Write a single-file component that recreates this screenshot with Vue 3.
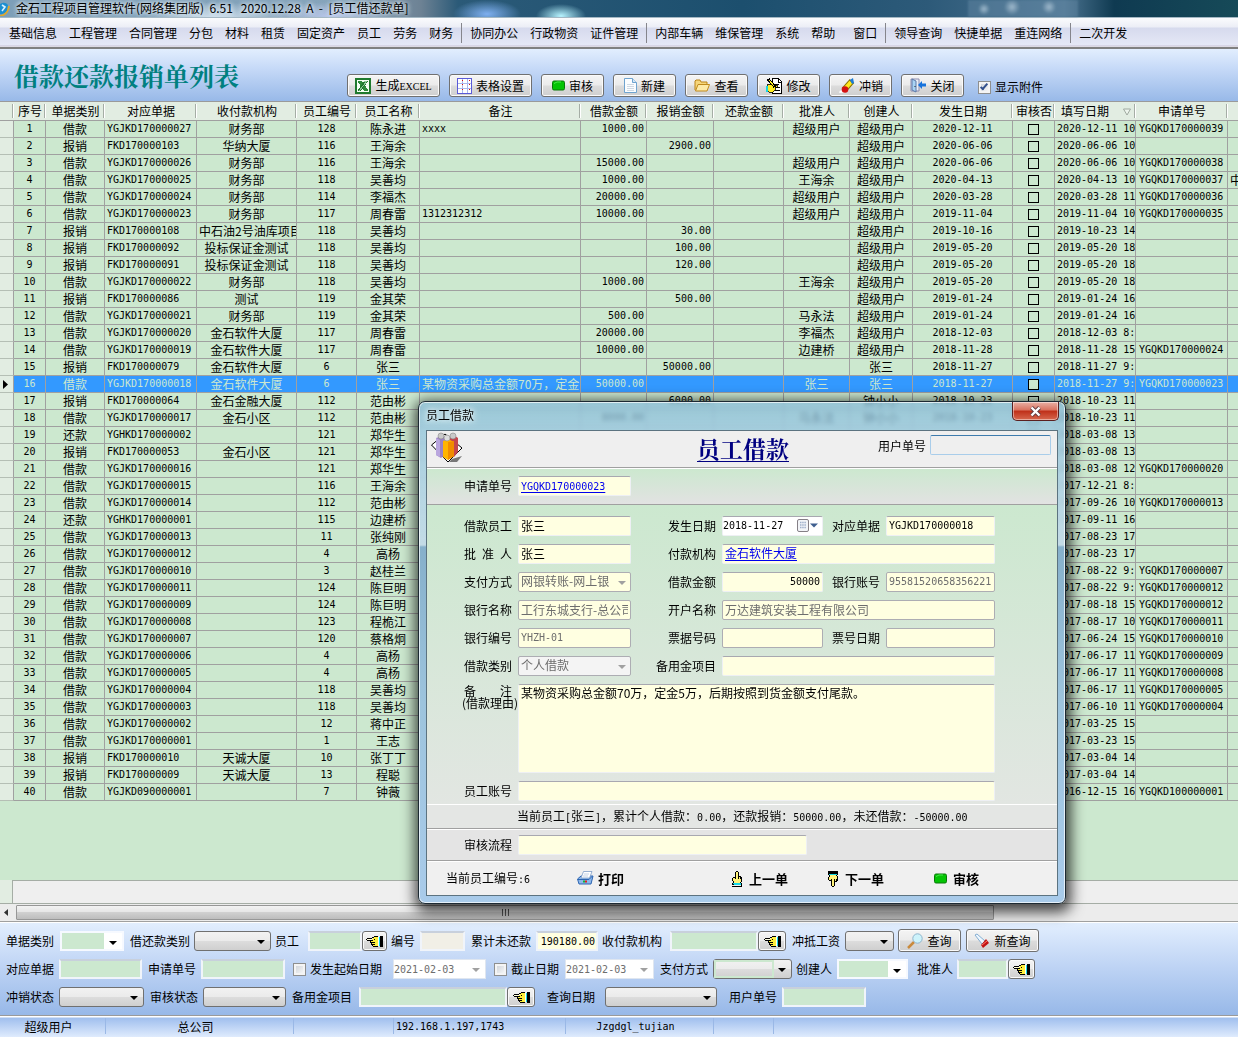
<script setup>
import { ref } from 'vue'

const menu = [
  '基础信息', '工程管理', '合同管理', '分包', '材料', '租赁', '固定资产', '员工', '劳务', '财务', '|',
  '协同办公', '行政物资', '证件管理', '|',
  '内部车辆', '维保管理', '系统', '帮助', '窗口', '|',
  '领导查询', '快捷单据', '重连网络', '|', '二次开发'
]

const tools = [
  { icon: 'excel', text: '生成', latin: 'EXCEL', size: 'xl' },
  { icon: 'grid', text: '表格设置', size: 'lg' },
  { icon: 'audit', text: '审核' },
  { icon: 'new', text: '新建' },
  { icon: 'folder', text: '查看' },
  { icon: 'edit', text: '修改' },
  { icon: 'eraser', text: '冲销' },
  { icon: 'door', text: '关闭' }
]

const columns = [
  { key: 'no', title: '序号' },
  { key: 'type', title: '单据类别' },
  { key: 'doc', title: '对应单据', align: 'left' },
  { key: 'org', title: '收付款机构' },
  { key: 'emp', title: '员工编号' },
  { key: 'name', title: '员工名称' },
  { key: 'note', title: '备注', align: 'left' },
  { key: 'loan', title: '借款金额', align: 'right' },
  { key: 'claim', title: '报销金额', align: 'right' },
  { key: 'repay', title: '还款金额', align: 'right' },
  { key: 'approver', title: '批准人' },
  { key: 'creator', title: '创建人' },
  { key: 'date', title: '发生日期' },
  { key: 'audited', title: '审核否' },
  { key: 'filled', title: '填写日期', align: 'left' },
  { key: 'apply', title: '申请单号', align: 'left' },
  { key: 'extra', title: '', align: 'left' }
]

const S = '超级用户'
const raw = [
  ['借款', 'YGJKD170000027', '财务部', '128', '陈永进', 'xxxx', '1000.00', '', S, S, '2020-12-11', '2020-12-11 10', 'YGQKD170000039'],
  ['报销', 'FKD170000103', '华纳大厦', '116', '王海余', '', '', '2900.00', '', S, '2020-06-06', '2020-06-06 10', ''],
  ['借款', 'YGJKD170000026', '财务部', '116', '王海余', '', '15000.00', '', S, S, '2020-06-06', '2020-06-06 10', 'YGQKD170000038'],
  ['借款', 'YGJKD170000025', '财务部', '118', '吴善均', '', '1000.00', '', '王海余', S, '2020-04-13', '2020-04-13 10', 'YGQKD170000037', '中'],
  ['借款', 'YGJKD170000024', '财务部', '114', '李福杰', '', '20000.00', '', S, S, '2020-03-28', '2020-03-28 11', 'YGQKD170000036'],
  ['借款', 'YGJKD170000023', '财务部', '117', '周春雷', '1312312312', '10000.00', '', S, S, '2019-11-04', '2019-11-04 10', 'YGQKD170000035'],
  ['报销', 'FKD170000108', '中石油2号油库项目', '118', '吴善均', '', '', '30.00', '', S, '2019-10-16', '2019-10-23 14', ''],
  ['报销', 'FKD170000092', '投标保证金测试', '118', '吴善均', '', '', '100.00', '', S, '2019-05-20', '2019-05-20 18', ''],
  ['报销', 'FKD170000091', '投标保证金测试', '118', '吴善均', '', '', '120.00', '', S, '2019-05-20', '2019-05-20 18', ''],
  ['借款', 'YGJKD170000022', '财务部', '118', '吴善均', '', '1000.00', '', '王海余', S, '2019-05-20', '2019-05-20 18', ''],
  ['报销', 'FKD170000086', '测试', '119', '金其荣', '', '', '500.00', '', S, '2019-01-24', '2019-01-24 16', ''],
  ['借款', 'YGJKD170000021', '财务部', '119', '金其荣', '', '500.00', '', '马永法', S, '2019-01-24', '2019-01-24 16', ''],
  ['借款', 'YGJKD170000020', '金石软件大厦', '117', '周春雷', '', '20000.00', '', '李福杰', S, '2018-12-03', '2018-12-03 8:', ''],
  ['借款', 'YGJKD170000019', '金石软件大厦', '117', '周春雷', '', '10000.00', '', '边建桥', S, '2018-11-28', '2018-11-28 15', 'YGQKD170000024'],
  ['报销', 'FKD170000079', '金石软件大厦', '6', '张三', '', '', '50000.00', '', '张三', '2018-11-27', '2018-11-27 9:', ''],
  ['借款', 'YGJKD170000018', '金石软件大厦', '6', '张三', '某物资采购总金额70万，定金', '50000.00', '', '张三', '张三', '2018-11-27', '2018-11-27 9:', 'YGQKD170000023'],
  ['报销', 'FKD170000064', '金石金融大厦', '112', '范由彬', '', '', '6000.00', '', '钟小小', '2018-10-23', '2018-10-23 11', ''],
  ['借款', 'YGJKD170000017', '金石小区', '112', '范由彬', '', '8000.00', '', '马永法', '钟小小', '2018-10-23', '2018-10-23 11', ''],
  ['还款', 'YGHKD170000002', '', '121', '郑华生', '', '', '', '', '', '', '2018-03-08 13', ''],
  ['报销', 'FKD170000053', '金石小区', '121', '郑华生', '', '', '', '', '', '', '2018-03-08 13', ''],
  ['借款', 'YGJKD170000016', '', '121', '郑华生', '', '', '', '', '', '', '2018-03-08 12', 'YGQKD170000020'],
  ['借款', 'YGJKD170000015', '', '116', '王海余', '', '', '', '', '', '', '2017-12-21 8:', ''],
  ['借款', 'YGJKD170000014', '', '112', '范由彬', '', '', '', '', '', '', '2017-09-26 10', 'YGQKD170000013'],
  ['还款', 'YGHKD170000001', '', '115', '边建桥', '', '', '', '', '', '', '2017-09-11 16', ''],
  ['借款', 'YGJKD170000013', '', '11', '张纯刚', '', '', '', '', '', '', '2017-08-23 17', ''],
  ['借款', 'YGJKD170000012', '', '4', '高杨', '', '', '', '', '', '', '2017-08-23 17', ''],
  ['借款', 'YGJKD170000010', '', '3', '赵桂兰', '', '', '', '', '', '', '2017-08-22 9:', 'YGQKD170000007'],
  ['借款', 'YGJKD170000011', '', '124', '陈巨明', '', '', '', '', '', '', '2017-08-22 9:', 'YGQKD170000012'],
  ['借款', 'YGJKD170000009', '', '124', '陈巨明', '', '', '', '', '', '', '2017-08-18 15', 'YGQKD170000012'],
  ['借款', 'YGJKD170000008', '', '123', '程桅江', '', '', '', '', '', '', '2017-08-17 10', 'YGQKD170000011'],
  ['借款', 'YGJKD170000007', '', '120', '蔡格炯', '', '', '', '', '', '', '2017-06-24 15', 'YGQKD170000010'],
  ['借款', 'YGJKD170000006', '', '4', '高杨', '', '', '', '', '', '', '2017-06-17 11', 'YGQKD170000009'],
  ['借款', 'YGJKD170000005', '', '4', '高杨', '', '', '', '', '', '', '2017-06-17 11', 'YGQKD170000008'],
  ['借款', 'YGJKD170000004', '', '118', '吴善均', '', '', '', '', '', '', '2017-06-17 11', 'YGQKD170000005'],
  ['借款', 'YGJKD170000003', '', '118', '吴善均', '', '', '', '', '', '', '2017-06-10 11', 'YGQKD170000004'],
  ['借款', 'YGJKD170000002', '', '12', '蒋中正', '', '', '', '', '', '', '2017-03-25 15', ''],
  ['借款', 'YGJKD170000001', '', '1', '王志', '', '', '', '', '', '', '2017-03-23 15', ''],
  ['报销', 'FKD170000010', '天诚大厦', '10', '张丁丁', '', '', '', '', '', '', '2017-03-04 14', ''],
  ['报销', 'FKD170000009', '天诚大厦', '13', '程聪', '', '', '', '', '', '', '2017-03-04 14', ''],
  ['借款', 'YGJKD090000001', '', '7', '钟薇', '', '', '', '', '', '', '2016-12-15 16', 'YGQKD100000001']
]
const rows = raw.map((r, i) => ({
  no: String(i + 1), type: r[0], doc: r[1], org: r[2], emp: r[3], name: r[4], note: r[5],
  loan: r[6], claim: r[7], repay: '', approver: r[8], creator: r[9], date: r[10],
  filled: r[11], apply: r[12], extra: r[13] || ''
}))
const selected = 15
const isLatin = (t) => /^[\x20-\x7e]+$/.test(t)

const query = [
  [
    { id: 'q-type', label: '单据类别', kind: 'combo' },
    { id: 'q-loantype', label: '借还款类别', kind: 'select' },
    { id: 'q-emp', label: '员工', kind: 'input', pick: true, tight: true },
    { id: 'q-code', label: '编号', kind: 'input', cls: 'beige', tight: true },
    { id: 'q-owed', label: '累计未还款', kind: 'input', cls: 'money', value: '190180.00' },
    { id: 'q-org', label: '收付款机构', kind: 'input', pick: true, tight: true },
    { id: 'q-salary', label: '冲抵工资', kind: 'select' }
  ],
  [
    { id: 'q-doc', label: '对应单据', kind: 'input' },
    { id: 'q-apply', label: '申请单号', kind: 'input' },
    { id: 'q-from', label: '发生起始日期', kind: 'date', check: true },
    { id: 'q-to', label: '截止日期', kind: 'date', check: true },
    { id: 'q-pay', label: '支付方式', kind: 'select', cls: 'edged' },
    { id: 'q-creator', label: '创建人', kind: 'combo', tight: true },
    { id: 'q-approver', label: '批准人', kind: 'input', pick: true, wide: true }
  ],
  [
    { id: 'q-offset', label: '冲销状态', kind: 'select' },
    { id: 'q-audit', label: '审核状态', kind: 'select' },
    { id: 'q-fund', label: '备用金项目', kind: 'input', pick: true },
    { id: 'q-date', label: '查询日期', kind: 'select', loose: true },
    { id: 'q-user', label: '用户单号', kind: 'input', loose: true }
  ]
]

const showFiles = ref(true)
const remark = ref('某物资采购总金额70万，定金5万，后期按照到货金额支付尾款。')
</script>

<template>
  <div class="app">
    <header class="titlebar">
      <svg class="logo" viewBox="0 0 12 14" width="12" height="14">
        <path d="M0 2 Q5 -1 8 3 L7 9 Q4 13 0 12Z" fill="#1c8fd0" />
        <path d="M2 3 L5 5 L2 9" fill="none" stroke="#d8f2ff" stroke-width="1.6" />
        <path d="M0 14 Q8 13 9 4" fill="none" stroke="#e0a92a" stroke-width="1.8" />
      </svg>
      <span>金石工程项目管理软件(网络集团版)&nbsp; 6.51&nbsp;&nbsp; 2020.12.28&nbsp; A&nbsp; -&nbsp; [员工借还款单]</span>
      <i class="ghost"></i>
    </header>

    <nav class="menu">
      <template v-for="(m, i) in menu" :key="i">
        <i v-if="m === '|'" class="bar"></i>
        <button v-else type="button" :class="{ win: m === '窗口' }">{{ m }}</button>
      </template>
    </nav>

    <section class="head">
      <h1>借款还款报销单列表</h1>
      <div class="tools">
        <button v-for="t in tools" :key="t.icon" type="button" class="btn" :class="t.size">
          <svg v-if="t.icon === 'excel'" width="16" height="16" viewBox="0 0 16 16" shape-rendering="crispEdges">
            <rect width="16" height="16" fill="#1f7a2e" /><rect x="2" y="2" width="12" height="12" fill="#f4fff4" />
            <path d="M3 3h4l6 9v1H9L3 4z" fill="#2b8a3a" /><path d="M9 3h4L6 13H3v-1z" fill="#1f7a2e" /><path d="M9 3h3L4 13" stroke="#8fc79a" fill="none" />
          </svg>
          <svg v-else-if="t.icon === 'grid'" width="15" height="16" viewBox="0 0 15 16" shape-rendering="crispEdges">
            <rect x="0.5" y="0.5" width="14" height="15" fill="#fff" stroke="#5a5ad8" />
            <path d="M5.5 1v14M10.500 1v14M1 5.500h13M1 10.500h13" stroke="#a9b6ee" />
            <path d="M5 2h1v1H5zM12 2h1v1h-1zM5 6h1v1H5zM12 6h1v1h-1zM5 11h1v1H5zM12 11h1v1h-1z" fill="#d01010" />
          </svg>
          <svg v-else-if="t.icon === 'audit'" width="13" height="11" viewBox="0 0 13 11">
            <rect x="0.5" y="1" width="12" height="9" rx="1.500" fill="#04c404" stroke="#087808" /><path d="M2 3.500 5 2h4" stroke="#4be84b" fill="none" />
          </svg>
          <svg v-else-if="t.icon === 'new'" width="13" height="15" viewBox="0 0 13 15">
            <path d="M.5.5h8l4 4v10H.5z" fill="#fbfdff" stroke="#6fa3cf" /><path d="M8.500.5v4h4" fill="#d5e8f8" stroke="#6fa3cf" />
            <path d="M3 6.500h7M3 8.500h7M3 10.500h7M3 12.500h7" stroke="#cfd9e3" />
          </svg>
          <svg v-else-if="t.icon === 'folder'" width="16" height="13" viewBox="0 0 16 13">
            <path d="M1 11V2l1-1h4l1 2h6v3" fill="#f6d67a" stroke="#b98318" /><path d="M1.500 12 4 5.500h11.500L13 12z" fill="#fdeaa6" stroke="#c08a1c" />
          </svg>
          <svg v-else-if="t.icon === 'edit'" width="16" height="16" viewBox="0 0 16 16" shape-rendering="crispEdges">
            <path d="M6.500.5h6l3 3v12h-9z" fill="#fff" stroke="#000" /><path d="M12 1v3h3M9 6h4M10 9h4M9 12h5" stroke="#000" fill="none" />
            <path d="M2 6h4l2 1h3v2H9v3l-2 2H3L1 12z" fill="#ffee22" stroke="#000" stroke-width=".8" /><path d="M2 1l7 8" stroke="#000" stroke-width="3" /><path d="M3 2l5 6" stroke="#ffee22" /><rect y="8" width="2" height="6" fill="#17d5e0" />
          </svg>
          <svg v-else-if="t.icon === 'eraser'" width="17" height="16" viewBox="0 0 17 16">
            <path d="M1 15c0-4 4-2 4-5l3 3c-1 2-4 2-7 2" fill="#fff" stroke="#ddd" stroke-width=".5" />
            <path d="M6 12 14 3" stroke="#887000" stroke-width="6" /><path d="M6 12 13 4" stroke="#ffe81c" stroke-width="4" />
            <circle cx="7" cy="11.500" r="3.300" fill="#d41111" /><path d="M12 2l3-2 1 5-2 1z" fill="#1a7bd8" />
          </svg>
          <svg v-else width="16" height="15" viewBox="0 0 16 15">
            <path d="M1 1h8v12H1z" fill="#e9eef6" stroke="#8d8db0" /><path d="M2 1l4 2v11l-4-2z" fill="#a9d3f4" stroke="#5c79a8" /><path d="M5 8v1" stroke="#222" />
            <path d="M8 7l4-4v2.500h4v3h-4V11z" fill="#1672dc" />
          </svg>
          <span>{{ t.text }}<b v-if="t.latin" class="serif">{{ t.latin }}</b></span>
        </button>
        <label class="show"><input v-model="showFiles" type="checkbox" class="chk" />显示附件</label>
      </div>
    </section>

    <main class="grid">
      <table>
        <colgroup><col class="c-mark" /><col v-for="c in columns" :key="c.key" :class="'c-' + c.key" /></colgroup>
        <thead>
          <tr>
            <th></th>
            <th v-for="c in columns" :key="c.key" :class="{ sorted: c.key === 'filled' }">
              {{ c.title }}<svg v-if="c.key === 'filled'" width="8" height="8" viewBox="0 0 8 8"><path d="M.5 1h7L4 7z" fill="#eef6ee" stroke="#9fa89f" /></svg>
            </th>
          </tr>
        </thead>
        <tbody>
          <tr v-for="(r, i) in rows" :key="i" :class="{ on: i === selected }">
            <td class="mark"><svg v-if="i === selected" width="5" height="9" viewBox="0 0 5 9"><path d="M0 0v9l5-4.500z" /></svg></td>
            <td v-for="c in columns" :key="c.key" :class="[c.align, { m: c.key !== 'audited' && isLatin(r[c.key]), over: c.key === 'org' && r.org.length > 8 }]">
              <input v-if="c.key === 'audited'" type="checkbox" class="box" :aria-label="'审核否 ' + r.no" />
              <template v-else>{{ r[c.key] }}</template>
            </td>
          </tr>
        </tbody>
      </table>
    </main>
    <div class="sumrow"><i></i><span></span></div>
    <div class="scroll">
      <svg width="16" height="9" viewBox="0 0 16 9"><path d="M8 1v7L4 4.500z" fill="#333" /></svg>
      <div class="thumb"><svg width="9" height="7" viewBox="0 0 9 7" shape-rendering="crispEdges"><path d="M1.500 0v7M4.500 0v7M7.500 0v7" stroke="#555" /></svg></div>
    </div>

    <form class="query" @submit.prevent>
      <div v-for="(line, n) in query" :key="n" class="line" :class="'line' + (n + 1)">
        <template v-for="f in line" :key="f.id">
          <span class="lab" :class="{ tight: f.tight, wide: f.wide, loose: f.loose, ticked: f.check }">
            <input v-if="f.check" :id="f.id + '-on'" type="checkbox" class="chk" :aria-label="f.label" />
            <label :for="f.id">{{ f.label }}</label>
          </span>
          <input v-if="f.kind === 'input'" :id="f.id" type="text" class="txt" :class="f.cls" :value="f.value" />
          <span v-else-if="f.kind === 'date'" class="sel date"><input :id="f.id" type="text" value="2021-02-03" disabled /></span>
          <span v-else class="sel" :class="[f.kind, f.cls]"><select :id="f.id"><option></option></select></span>
          <button v-if="f.pick" type="button" class="btn pick" aria-label="选择">
            <svg width="17" height="11" viewBox="0 0 17 11" shape-rendering="crispEdges">
              <path d="M1 3h5v2H1z" fill="#ffffe0" /><path d="M6 3l2-2h4v9H6V8H5V5h1z" fill="#fff03c" />
              <path d="M1 2h5v1H1zM0 3h1v1H0zM1 4h6v1H1zM6 1h2v1H6zM8 0h4v1H8zM4 5h1v2H4zM5 6h4v1H5zM5 7h1v2H5zM6 8h3v1H6zM6 9h1v1H6zM7 10h5v1H7zM8 3h1v1H8z" fill="#000" />
              <path d="M12 1h1v9h-1z" fill="#fff" /><path d="M13 1h1v9h-1z" fill="#14d8e6" /><path d="M14 0h3v11h-3z" fill="#000" />
            </svg>
          </button>
        </template>
        <div v-if="n === 0" class="actions">
          <button type="submit" class="btn">
            <svg width="16" height="16" viewBox="0 0 16 16"><path d="M1 15l6-6" stroke="#c98a3c" stroke-width="2.500" /><circle cx="10.500" cy="5.500" r="4.700" fill="#cdf3fb" stroke="#8eb4cc" /></svg>查询
          </button>
          <button type="reset" class="btn new">
            <svg width="16" height="16" viewBox="0 0 16 16"><path d="M1 2l2-1 8 7-3 3z" fill="#eef7ff" stroke="#6a9cc8" stroke-width=".8" /><path d="M7 12l5-6 3 4-6 5z" fill="#c21414" /><path d="M8 12l5-4" stroke="#ff7a6a" /></svg>新查询
          </button>
        </div>
      </div>
    </form>

    <footer class="status">
      <span>超级用户</span><span>总公司</span><span></span><span class="m ip">192.168.1.197,1743</span><span class="m">Jzgdgl_tujian</span><span></span><span></span>
    </footer>

    <section class="dialog" role="dialog" aria-label="员工借款">
      <div class="dtitle">
        <span>员工借款</span>
        <button type="button" class="close" aria-label="关闭">
          <svg width="13" height="11" viewBox="0 0 13 11"><path d="M2.500 1.500l8 8M10.500 1.500l-8 8" stroke="#5d3b40" stroke-width="4" /><path d="M2.500 1.500l8 8M10.500 1.500l-8 8" stroke="#fff" stroke-width="2.400" /></svg>
        </button>
      </div>
      <div class="dbody">
        <div class="dhead">
          <svg width="32" height="32" viewBox="0 0 32 32">
            <path d="M.5 13 14 2l17 14-14 14z" fill="#fff" stroke="#000" /><path d="M21 27l10-3-5 6h-8z" fill="#777" />
            <path d="M5 6l6-2 3 2v17l-4 3-5-3z" fill="#9a82c4" /><path d="M5 6l4 2v17l-4-2z" fill="#b9a6de" />
            <path d="M19 6l5-2 3 2v14l-4 5-4-2z" fill="#c4464e" /><path d="M12 9l5-2 6 3v14l-6 4-5-3z" fill="#ffb400" /><path d="M17 10l6-1v15l-6 4z" fill="#f08c00" />
            <circle cx="10" cy="4" r="3" fill="#c9c9c9" stroke="#888" stroke-width=".6" /><circle cx="22" cy="4" r="3" fill="#c9c9c9" stroke="#888" stroke-width=".6" /><circle cx="16" cy="6" r="3" fill="#ddd" stroke="#888" stroke-width=".6" />
          </svg>
          <h2>员工借款</h2>
          <label for="d-user">用户单号</label>
          <input id="d-user" type="text" class="focus" />
        </div>
        <div class="form apply">
          <label>申请单号</label><span class="in"><a href="#" class="m">YGQKD170000023</a></span>
        </div>
        <div class="form main">
          <label for="d1">借款员工</label><input id="d1" class="in" value="张三" />
          <label for="d2">发生日期</label>
          <span class="in day"><input id="d2" class="m" value="2018-11-27" />
            <svg width="22" height="14" viewBox="0 0 22 14"><rect x=".5" y=".5" width="11" height="12" rx="1.500" fill="#f2f4f8" stroke="#857f86" /><path d="M3 3.500h6M3 6h6M3 8.500h6" stroke="#9fb0cc" stroke-width="1.500" stroke-dasharray="1.500 .7" /><path d="M13 4.500h8l-4 4z" fill="#3f5f8f" /></svg>
          </span>
          <label for="d3">对应单据</label><input id="d3" class="in m" value="YGJKD170000018" />

          <label for="d4" class="spread"><i>批</i><i>准</i><i>人</i></label><input id="d4" class="in" value="张三" />
          <label>付款机构</label><span class="in span"><a href="#">金石软件大厦</a></span>

          <label for="d5">支付方式</label><span class="in sel dis"><select id="d5" disabled><option>网银转账-网上银</option></select></span>
          <label for="d6">借款金额</label><input id="d6" class="in m num" value="50000" />
          <label for="d7">银行账号</label><input id="d7" class="in m dis" disabled value="95581520658356221" />

          <label for="d8">银行名称</label><input id="d8" class="in dis" disabled value="工行东城支行-总公司" />
          <label for="d9">开户名称</label><input id="d9" class="in dis span" disabled value="万达建筑安装工程有限公司" />

          <label for="d10">银行编号</label><input id="d10" class="in m dis" disabled value="YHZH-01" />
          <label for="d11">票据号码</label><input id="d11" class="in dis" disabled />
          <label for="d12">票号日期</label><input id="d12" class="in dis" disabled />

          <label for="d13">借款类别</label><span class="in sel dis gray"><select id="d13" disabled><option>个人借款</option></select></span>
          <label for="d14">备用金项目</label><input id="d14" class="in span" />

          <label for="d15" class="note"><span><i>备</i><i>注</i></span>(借款理由)</label><textarea id="d15" v-model="remark" class="in full"></textarea>

          <label for="d16">员工账号</label><input id="d16" class="in full" />
        </div>
        <p class="sum">当前员工<b>[</b>张三<b>]</b>，累计个人借款：<b>0.00</b>，还款报销：<b>50000.00</b>，未还借款：<b>-50000.00</b></p>
        <div class="form flow"><label for="d17">审核流程</label><input id="d17" class="in" /></div>
        <div class="dfoot">
          <span>当前员工编号<b class="m">:6</b></span>
          <button type="button">
            <svg width="17" height="15" viewBox="0 0 17 15"><path d="M.5 8 4 5h12l-2 8H2z" fill="#8db8ea" stroke="#2c65b2" /><path d="M4 7 6.500.5h8.500L12.500 7z" fill="#fff" stroke="#7c9cc6" stroke-width=".8" /><path d="M7 3h5M6 5h5" stroke="#c5d3e6" /><path d="M1 8.500h11l3-3" stroke="#2c65b2" fill="none" /><path d="M6 10.500h2" stroke="#12b53a" stroke-width="2" /><path d="M8 10.500h2" stroke="#d22" stroke-width="2" /></svg>打印
          </button>
          <button type="button">
            <svg width="12" height="16" viewBox="0 0 12 16" shape-rendering="crispEdges"><path d="M5 1h2v4h3v6l-2 1H3l-1-2V7h3z" fill="#fff27a" /><path d="M5 0h2v1H5zM4 1h1v7H4zM7 1h1v7H7zM8 5h2v1H8zM10 6h1v5h-1zM2 6h2v1H2zM1 7h1v3H1zM2 10h1v2H2zM9 11h1v1H9zM9 6h1v2H9z" fill="#000" /><rect x="2" y="12" width="8" height="2" fill="#14d8e6" /><path d="M1 12h1v1h8v-1h1v4H1v-1h9v-1H1z" fill="#000" /><rect x="3" y="13" width="7" height="1" fill="#14d8e6" /></svg><em>上一单</em>
          </button>
          <button type="button">
            <svg width="12" height="16" viewBox="0 0 12 16" shape-rendering="crispEdges"><g transform="matrix(1 0 0 -1 0 16)"><path d="M5 1h2v4h3v6l-2 1H3l-1-2V7h3z" fill="#fff27a" /><path d="M5 0h2v1H5zM4 1h1v7H4zM7 1h1v7H7zM8 5h2v1H8zM10 6h1v5h-1zM2 6h2v1H2zM1 7h1v3H1zM2 10h1v2H2zM9 11h1v1H9zM9 6h1v2H9z" fill="#000" /><rect x="1" y="12" width="10" height="4" fill="#000" /><rect x="2" y="12" width="8" height="1" fill="#14d8e6" /></g></svg><em>下一单</em>
          </button>
          <button type="button">
            <svg width="13" height="11" viewBox="0 0 13 11"><rect x="0.5" y="1" width="12" height="9" rx="1.500" fill="#04c404" stroke="#087808" /><path d="M2 3.500 5 2h4" stroke="#4be84b" fill="none" /></svg><em>审核</em>
          </button>
        </div>
      </div>
    </section>
  </div>
</template>

<style>
body { margin: 0; overflow-x: hidden; }
</style>

<style scoped>
.app {
  position: relative; display: flex; flex-direction: column; min-height: 100vh; overflow: hidden;
  font: 12px/16px "Noto Sans CJK SC", sans-serif; color: #000; background: #cce8cf;
}
.app *, .app *::after { box-sizing: border-box; }
button, input, select, textarea { font: inherit; color: inherit; margin: 0; padding: 0; border-radius: 0; min-width: 0; }
i, em { font-style: normal; }
svg { flex: none; display: block; }
.app .m { font-family: "DejaVu Sans Mono", monospace; font-size: 10px; font-weight: normal; }

.titlebar {
  display: flex; align-items: center; height: 18px; gap: 4px; white-space: nowrap; line-height: 14px; border-bottom: 1px solid #a4b8c4;
  background:
    radial-gradient(ellipse 25px 12px at 561px 16px, #b8f4ff, transparent),
    radial-gradient(ellipse 34px 14px at 487px 14px, #7fb0f0, transparent),
    radial-gradient(ellipse 70px 16px at 215px 18px, #d5e4f0, transparent),
    radial-gradient(ellipse 60px 14px at 330px 16px, #b8c6e8, transparent),
    linear-gradient(90deg, #7d9fb8, #86a4bb 28%, #6d8294 34%, #2b5a78 37%, #1c4f6e 60%, #2d5a79 75%, #4b7390 86%, #0f3a51 90%, #164a58);
}
.titlebar span { padding-bottom: 2px; text-shadow: 0 0 5px #fff, 0 0 5px #dfefff; }
.ghost {
  margin-left: auto; margin-right: 160px; width: 110px; height: 17px; filter: blur(1px);
  background: radial-gradient(circle 6px at 16px 9px, #9fb9cc, transparent), radial-gradient(circle 8px at 44px 7px, #9fb9cc, transparent), radial-gradient(circle 7px at 81px 7px, #9fb9cc, transparent), rgba(110, 146, 172, .4);
}

.menu {
  display: flex; align-items: center; gap: 12px; height: 31px; padding-left: 9px; white-space: nowrap;
  background: linear-gradient(#fafbfd, #eceef6 9px, #d6daed 10px, #e5e8f6 27px, #c9c3d6 28px, #f0f0f0); border-bottom: 2px solid #808080;
}
.menu button { border: 0; background: none; }
.menu .win { margin-left: 6px; }
.bar { width: 1px; height: 20px; margin: 0 -4px; background: #85858c; }

.head { display: flex; height: 53px; background: linear-gradient(#e2eefe, #c4d8f7 40%, #98b9e8); border-bottom: 1px solid #9a9a9a; }
.head h1 { flex: none; width: 347px; margin: 0; padding: 10px 0 0 14px; font: bold 25px/32px "Noto Serif CJK SC", "Noto Sans CJK SC", serif; color: #008080; white-space: nowrap; }
.tools { display: flex; gap: 9px; padding-top: 25px; align-items: flex-start; }
.btn {
  display: flex; align-items: center; justify-content: center; gap: 4px; width: 63px; height: 23px; white-space: nowrap;
  border: 1px solid #707070; border-radius: 3px; background: linear-gradient(#f4f4f4, #ebebeb 48%, #dcdcdc 52%, #cfcfcf); box-shadow: inset 0 0 0 1px #fafafa;
}
.btn.lg { width: 83px; }
.btn.xl { width: 93px; }
.serif { font: 10px/16px "Liberation Serif", serif; }
.show { display: flex; align-items: center; gap: 4px; margin: 5px 0 0 5px; }
.chk { appearance: none; flex: none; position: relative; width: 13px; height: 13px; border: 1px solid #8e8f8f; background: linear-gradient(135deg, #c9ced4, #fdfdfd); box-shadow: inset 0 0 0 2px #f4f4f4; }
.chk:checked::after { content: ""; position: absolute; left: 3px; top: 0; width: 4px; height: 8px; border: solid #33508c; border-width: 0 2px 2px 0; transform: rotate(40deg); }

.grid { flex: 1; }
table { width: 100%; table-layout: fixed; border-collapse: separate; border-spacing: 0; }
.c-mark { width: 14px; } .c-no { width: 32px; } .c-type { width: 59px; } .c-doc { width: 92px; } .c-org { width: 100px; }
.c-emp { width: 60px; } .c-name { width: 63px; } .c-note { width: 161px; } .c-loan { width: 66px; } .c-claim { width: 67px; }
.c-repay { width: 70px; } .c-approver { width: 66px; } .c-creator { width: 63px; } .c-date { width: 100px; }
.c-audited { width: 42px; } .c-filled { width: 81px; } .c-apply { width: 92px; }
th {
  height: 19px; padding: 0; font-weight: normal; line-height: 16px; white-space: nowrap; border-bottom: 1px solid #a0a0a0; overflow: hidden;
  background: linear-gradient(#a5ada5, #a5ada5) right 1px top 2px / 1px 14px no-repeat, linear-gradient(#fff, #fff) right top 2px / 1px 14px no-repeat, #e2ede2;
}
th:last-child { background: #e2ede2; }
.sorted { text-align: left; padding-left: 6px; }
.sorted svg { display: inline-block; margin-left: 14px; }
td { height: 17px; padding: 0; line-height: 16px; text-align: center; white-space: nowrap; overflow: hidden; border: solid #a0a0a0; border-width: 0 1px 1px 0; }
td:last-child { border-right: 0; }
td.left { text-align: left; padding-left: 2px; }
td.left:nth-child(17) { padding-left: 3px; }
td.over { text-align: left; padding-left: 2px; }
td.right { text-align: right; padding-right: 2px; }
.mark { background: #e2ede2; border-bottom-color: #b5bfb5; }
.mark svg { margin-left: 3px; }
.on td:not(.mark) { background: #39f; color: #cce8cf; }
.box { appearance: none; display: block; width: 11px; height: 11px; margin: 0 auto; border: 1px solid #000; background: #cce8cf; }

.sumrow { display: flex; height: 24px; border-bottom: 1px solid #a5ada5; }
.sumrow i { width: 13px; background: #e2ede2; border-right: 1px solid #a5ada5; }
.sumrow span { flex: 1; background: #efefef; border-top: 1px solid #a5ada5; }
.scroll { display: flex; align-items: center; height: 18px; background: #ececec; border-bottom: 1px solid #a0a0a0; padding-right: 244px; }
.thumb { flex: 1; display: flex; align-items: center; justify-content: center; height: 15px; border: 1px solid #979797; border-radius: 1px; background: linear-gradient(#f3f3f3, #e6e6e6 45%, #d0d0d0 50%, #bdbdbd); }

.query { display: flex; flex-direction: column; gap: 8px; height: 94px; padding-top: 8px; background: linear-gradient(#e2eefe, #c0d5f5 45%, #97b8e8); border-bottom: 1px solid #9a9a9a; border-top: 1px solid #fff; }
.line { display: grid; height: 20px; white-space: nowrap; }
.line1 { grid-template-columns: 60px 64px 70px 77px 37px 54px 25px 33px 45px 71px 62px 72px 88px 28px 59px 49px auto; }
.line2 { grid-template-columns: 59px 83px 59px 84px 108px 93px 79px 89px 59px 79px 45px 71px 49px 51px 27px; }
.line3 { grid-template-columns: 59px 85px 59px 83px 73px 148px 28px 70px 112px 65px 84px; }
.lab { display: flex; align-items: center; gap: 4px; height: 20px; padding-left: 6px; }
.lab.tight { padding-left: 4px; } .lab.wide { padding-left: 9px; } .lab.loose { padding-left: 12px; } .lab.ticked { padding-left: 8px; }
.txt { width: 100%; height: 20px; border: 2px solid #f0f4fa; border-top-color: #c8d0dc; background: #cce8cf; }
.txt.beige { background: #f1efe6; }
.txt.money { background: #ffffe1; text-align: right; padding-right: 1px; font: 10px/16px "DejaVu Sans Mono", monospace; }
.sel { position: relative; display: block; height: 20px; }
.sel::after { content: ""; position: absolute; right: 5px; top: 8px; border: solid transparent; border-width: 4px 4px 0; border-top-color: #000; pointer-events: none; }
.sel select, .sel input { appearance: none; display: block; width: 100%; height: 100%; border: 0; background: none; outline: 0; }
.sel.select { border: 1px solid #707070; border-radius: 3px; background: linear-gradient(#f2f2f2, #ebebeb 48%, #dcdcdc 52%, #cfcfcf); }
.sel.select.edged::before { content: ""; position: absolute; left: 0; top: 0; bottom: 0; right: 17px; border: 2px solid #cce8cf; pointer-events: none; }
.sel.combo { border: 2px solid #f6f9ff; background: linear-gradient(#cce8cf, #cce8cf) 0 0 / calc(100% - 18px) 100% no-repeat, #fff; }
.sel.date { background: #fff; border: 1px solid #dfe6f0; }
.sel.date input { color: #6d6d6d; font: 10px/16px "DejaVu Sans Mono", monospace; }
.sel.date::after { border-top-color: #a0a0a0; }
.pick { width: 100%; height: 20px; }
.actions { display: flex; gap: 5px; padding-left: 4px; margin-top: -2px; }
.actions .new { width: 73px; }

.status { display: grid; grid-template-columns: 106px 188px 100px 172px 148px 60px 1fr; height: 21px; padding-top: 2px; background: linear-gradient(#fff 1px, #a0bfee 2px, #dfebfd); }
.status span { text-align: center; line-height: 18px; border-right: 1px solid #9ab8e6; height: 16px; padding-right: 8px; }
.status span:last-child { border-right: 0; }
.status .ip { text-align: left; padding-left: 2px; }

.dialog {
  position: absolute; left: 418px; top: 401px; width: 648px; padding: 0 7px 7px; border: 1px solid #1d2a33; border-radius: 7px;
  background: linear-gradient(rgba(134, 186, 214, .74), rgba(158, 202, 226, .82) 30px, #c3dbe6 143px, #86b0cb 145px, #9dc4dd 60%, #a9cbea);
  backdrop-filter: blur(2px); box-shadow: inset 0 0 0 1px rgba(255, 255, 255, .7), 1px 4px 14px 4px rgba(0, 0, 0, .72);
}
.dtitle { display: flex; justify-content: space-between; height: 28px; line-height: 26px; margin-right: -1px; text-shadow: 0 0 5px #fff, 0 0 8px #fff; }
.close { display: flex; align-items: center; justify-content: center; width: 47px; height: 19px; border: 1px solid #5b2020; border-top: 0; border-radius: 0 0 5px 5px; background: linear-gradient(#e8b0a4, #d9715e 45%, #bf2f18 50%, #d7684e); box-shadow: inset 0 0 0 1px rgba(255, 255, 255, .45); }
.dbody { border: 1px solid #5c7380; }
.dhead { display: grid; grid-template-columns: 266px 181px 52px 121px; height: 37px; padding-left: 4px; background: #efefef; border-bottom: 1px solid #a0a0a0; white-space: nowrap; }
.dhead svg { margin-top: 1px; }
.dhead h2 { justify-self: start; margin: 6px 0 0; font: bold 23px/24px "Noto Serif CJK SC", "Noto Sans CJK SC", serif; color: #000080; text-decoration: underline; text-decoration-thickness: 1px; text-underline-offset: 3px; }
.dhead label { padding-top: 7px; }
.focus { height: 20px; margin-top: 4px; border: 1px solid #a9cdea; border-top-color: #3d7bad; border-radius: 2px; background: #efefef; }
.form { display: grid; grid-template-columns: 85px 113px 79px 101px 51px 109px; column-gap: 6px; row-gap: 8px; white-space: nowrap; }
.form label { text-align: right; line-height: 20px; }
.in { width: 100%; height: 20px; padding: 0 2px; border: 1px solid #eef0f4; border-top-color: #a8a8b0; border-radius: 2px; background: #ffffe1; overflow: hidden; line-height: 16px; }
input.in:not(.m) { padding-bottom: 2px; }
.in.dis { border-color: #adadb3; color: #6d6d6d; }
.in.m { line-height: 14px; padding-bottom: 2px; }
.in.num { text-align: right; }
.in a { color: #00e; text-underline-offset: 2px; display: inline-block; line-height: 16px; }
.in.gray { background: #f4f4f4; }
.span { grid-column: 4 / 7; }
.full { grid-column: 2 / 7; }
.sel.in::after { right: 4px; top: 8px; border-top-color: #a0a0a0; }
.sel.in select { opacity: 1; color: #6d6d6d; line-height: 16px; padding-bottom: 2px; }
.in.day { display: flex; align-items: center; background: #fff; padding-left: 0; }
.in.day input { width: 74px; border: 0; background: none; }
textarea.in { height: 89px; resize: none; display: block; }
.form .spread { display: flex; justify-content: space-between; padding-left: 37px; }
.form .note { line-height: 12px; padding-top: 1px; margin-right: -6px; }
.note span { display: flex; justify-content: space-between; width: 48px; margin-left: 37px; }
.apply { padding: 8px 0; height: 37px; background: linear-gradient(#cce8cf, #e2e2e2); border-bottom: 1px solid #a0a0a0; border-top: 1px solid #fff; padding-top: 7px; }
.main { padding: 11px 0 3px; background: linear-gradient(#cce8cf, #e2e6e2); }
.sum { margin: 0; height: 25px; padding-left: 90px; line-height: 22px; white-space: nowrap; background: #e4e6e4; border-top: 1px solid #fff; border-bottom: 1px solid #a0a0a0; }
.sum b { font: 10px/16px "DejaVu Sans Mono", monospace; }
.flow { grid-template-columns: 85px 289px; height: 32px; padding-top: 5px; background: #e4e4e4; border-top: 1px solid #fff; border-bottom: 1px solid #a0a0a0; }
.dfoot { display: grid; grid-template-columns: 131px 154px 96px 107px auto; align-items: center; justify-content: start; height: 34px; padding-left: 19px; background: #f0f0f0; border-top: 1px solid #fff; white-space: nowrap; }
.dfoot button { display: flex; align-items: center; gap: 4px; border: 0; background: none; font-weight: bold; font-size: 13px; }
.dfoot em { padding-left: 2px; }
</style>
